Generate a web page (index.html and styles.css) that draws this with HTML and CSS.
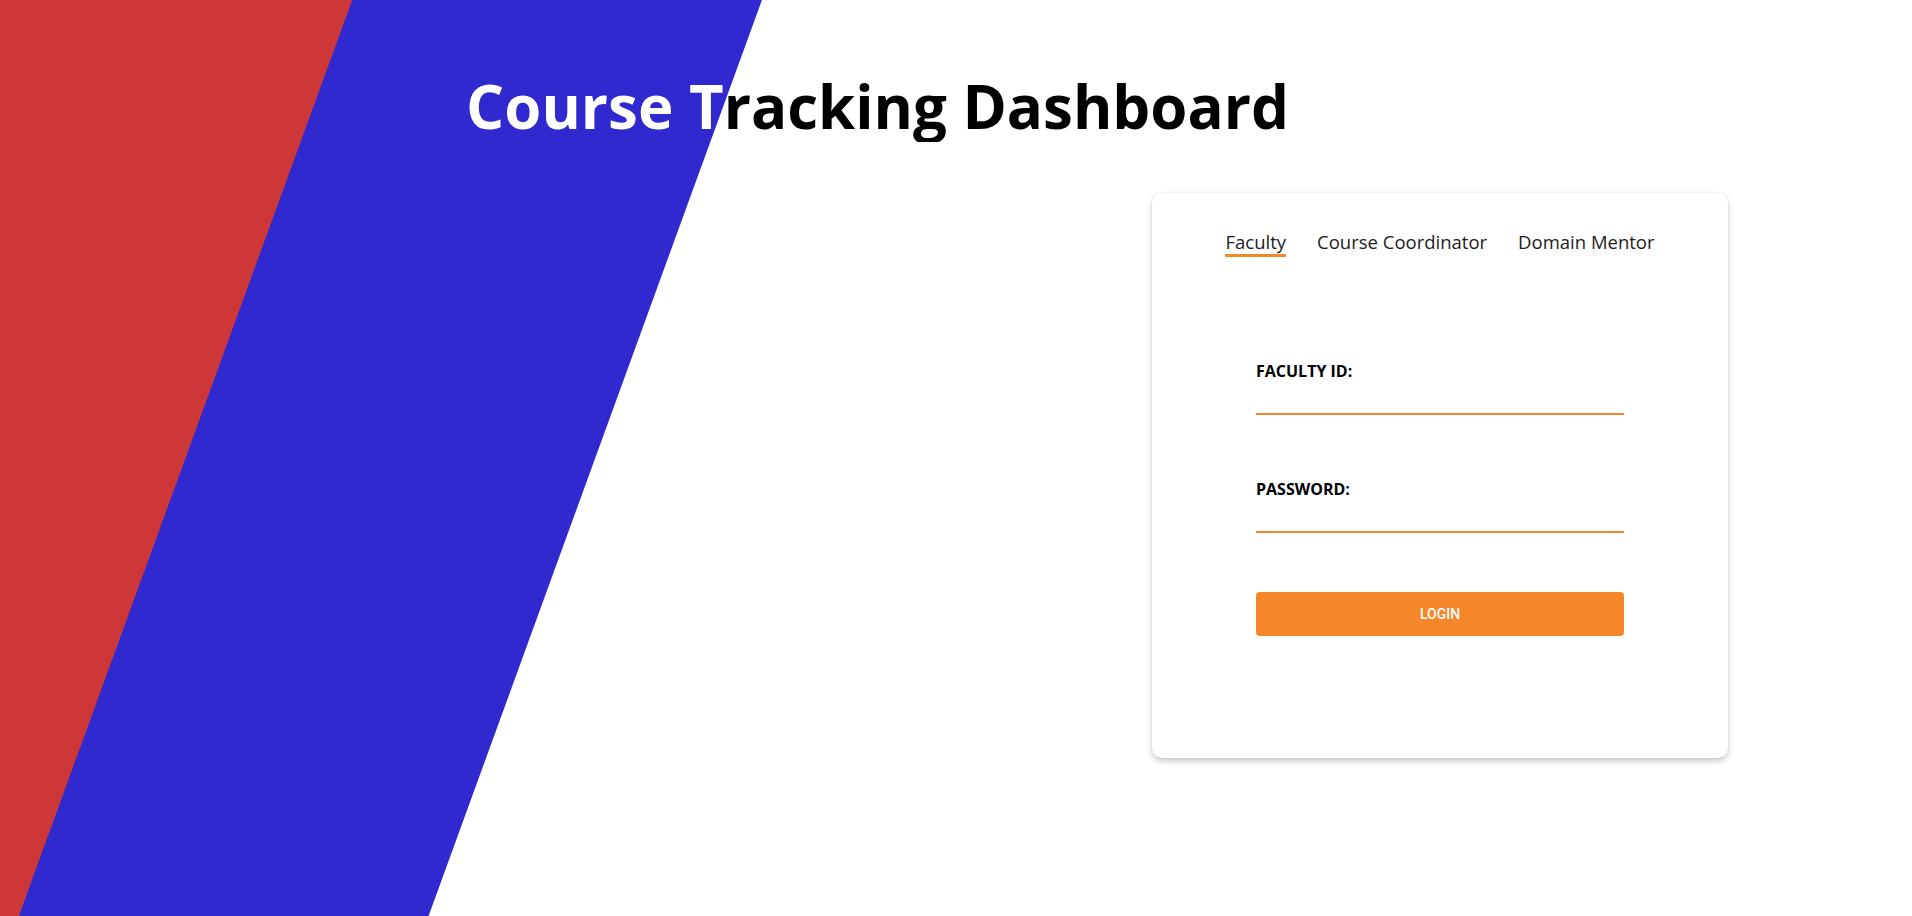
FILE: index.html
```html
<!DOCTYPE html>
<html lang="en">
<head>
<meta charset="utf-8">
<title>Course Tracking Dashboard</title>
<link rel="stylesheet" href="styles.css">
</head>
<body>
<div class="page">
  <header class="hero">
    <h1 class="title">Course Tracking Dashboard</h1>
  </header>
  <main class="content">
    <section class="card">
      <nav class="tabs">
        <span class="tab tab-active">Faculty</span>
        <span class="tab">Course Coordinator</span>
        <span class="tab">Domain Mentor</span>
      </nav>
      <form class="form">
        <label class="field">
          <span class="label">FACULTY ID:</span>
          <input class="input" type="text">
        </label>
        <label class="field field-second">
          <span class="label">PASSWORD:</span>
          <input class="input" type="password">
        </label>
        <button class="login" type="button">LOGIN</button>
      </form>
    </section>
  </main>
</div>
</body>
</html>
```

FILE: styles.css
```css
html, body {
  margin: 0;
  padding: 0;
}

body {
  font-family: "Open Sans", "Liberation Sans", sans-serif;
  color: #000;
}

.page {
  min-height: 100vh;
  box-sizing: border-box;
  background: linear-gradient(110deg,
    #cd3737 0, #cd3737 330.5px,
    #3029cf 331.5px, #3029cf 715.5px,
    #ffffff 716.5px) fixed;
  overflow: hidden;
}

.hero {
  padding: 70px 0 0 466px;
}

.title {
  margin: 0;
  font-family: "Open Sans", "Liberation Sans", sans-serif;
  font-weight: 700;
  font-size: 60px;
  line-height: 72px;
  letter-spacing: 0;
  display: inline-block;
  color: transparent;
  background: linear-gradient(110deg, #ffffff 0, #ffffff 715.5px, #000000 716.5px) fixed;
  -webkit-background-clip: text;
  background-clip: text;
}

.content {
  display: flex;
  justify-content: flex-end;
  padding: 51px 184px 0 0;
}

.card {
  width: 576px;
  box-sizing: border-box;
  background: #fff;
  border-radius: 10px;
  box-shadow: 0 3px 6px rgba(0, 0, 0, 0.22), 0 0 2px rgba(0, 0, 0, 0.08);
  padding: 37px 0 122px;
  display: flex;
  flex-direction: column;
  align-items: center;
}

.tabs {
  display: flex;
  gap: 31px;
  justify-content: center;
}

.tab {
  font-family: "Open Sans", "Liberation Sans", sans-serif;
  font-weight: 400;
  font-size: 18.5px;
  line-height: 24px;
  color: #1c1c1c;
  border-bottom: 3px solid transparent;
}

.tab-active {
  border-bottom-color: #f5862a;
}

.form {
  width: 368px;
  display: flex;
  flex-direction: column;
  margin-top: 102px;
}

.field {
  display: flex;
  flex-direction: column;
}

.field-second {
  margin-top: 62px;
}

.label {
  font-family: "Open Sans", "Liberation Sans", sans-serif;
  font-weight: 700;
  font-size: 16px;
  line-height: 24px;
  color: #000;
}

.input {
  display: block;
  width: 100%;
  height: 32px;
  box-sizing: border-box;
  border: none;
  border-bottom: 2px solid #f5862a;
  background: transparent;
  outline: none;
  padding: 0;
  font-family: "Open Sans", sans-serif;
  font-size: 16px;
}

.login {
  margin-top: 59px;
  height: 44px;
  width: 100%;
  border: none;
  border-radius: 4px;
  background: #f5862a;
  color: #fff;
  font-family: Roboto, "Liberation Sans", sans-serif;
  font-weight: 500;
  font-size: 14px;
  cursor: pointer;
}
```
